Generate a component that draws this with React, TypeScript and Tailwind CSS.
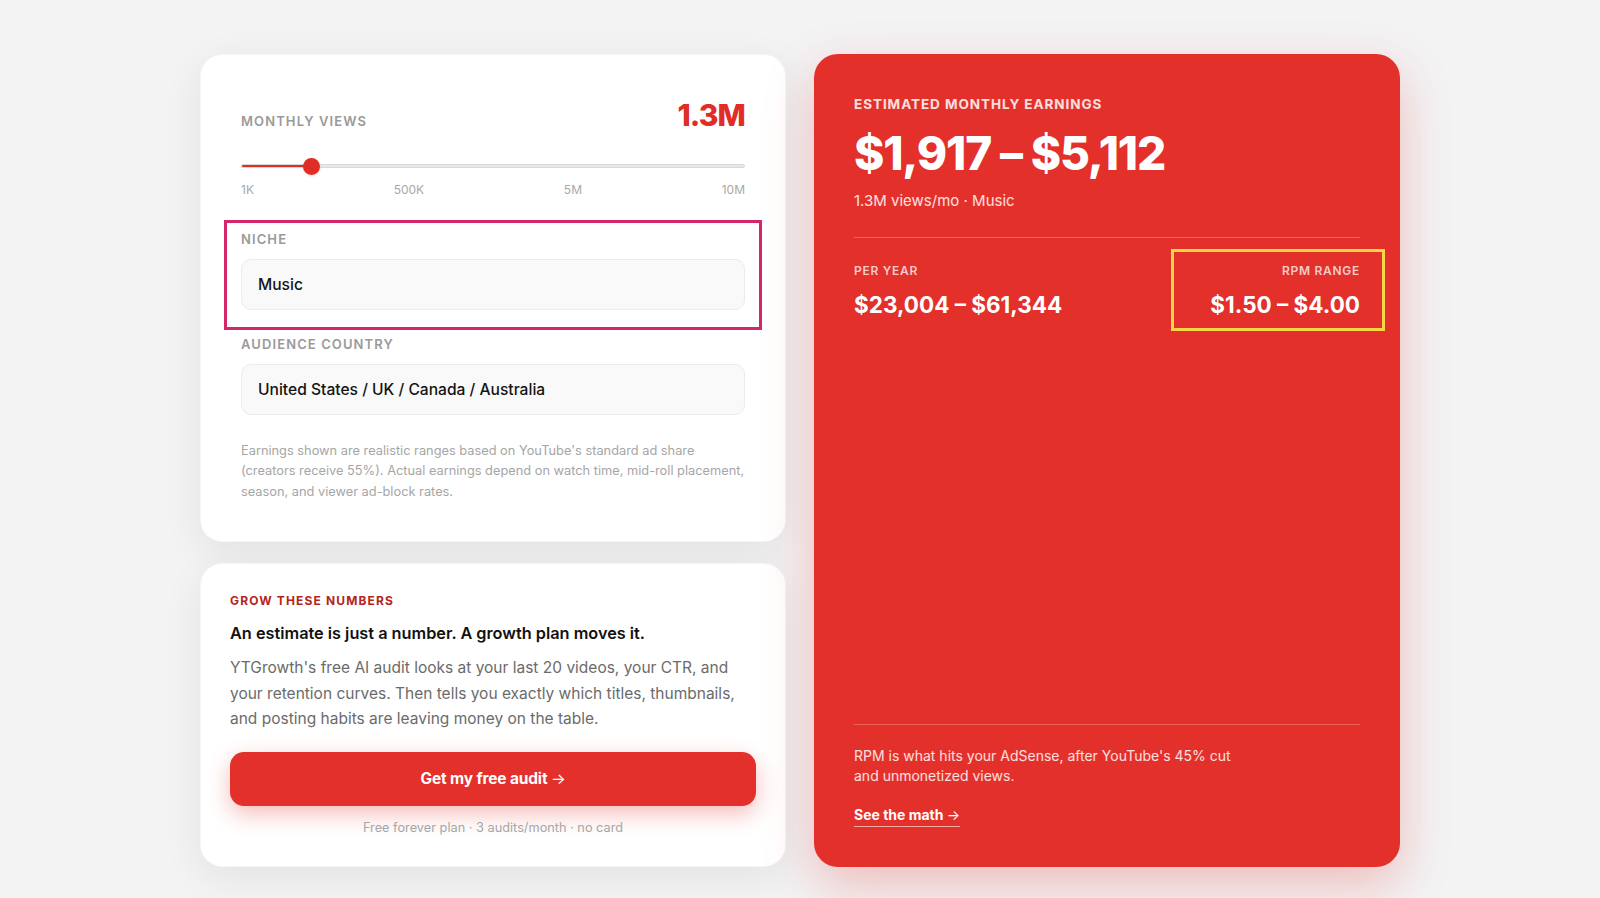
import React from 'react'

const TICKS = ['1K', '500K', '5M', '10M']

const labelCls = 'text-[13px] font-semibold tracking-[0.085em] uppercase text-[#9a9a9a] leading-4'
const fieldCls =
  'h-[51px] flex items-center px-4 rounded-[10px] bg-[#f9f9f9] border border-[#ebebeb] text-[15.6px] font-medium text-[#141414]'

function Arrow() {
  return <span className="font-normal">→</span>
}

export default function App() {
  const views = 1_300_000
  const pct = 13.9

  return (
    <div className="min-h-screen bg-[#f3f3f4] font-[Inter,'Noto_Sans',sans-serif] antialiased">
      <div className="mx-auto w-[1200px] pt-[54px] pb-8 grid grid-cols-2 gap-7">
        {/* Left column */}
        <div className="flex flex-col gap-[21px]">
          {/* Calculator inputs */}
          <div className="bg-white rounded-[22px] border border-black/[0.04] shadow-[0_10px_40px_rgba(0,0,0,0.07)] px-10 pt-[45px] pb-[39px]">
            <div className="flex items-baseline justify-between">
              <span className={labelCls}>Monthly views</span>
              <span className="text-[30px] leading-none font-extrabold tracking-[-0.03em] text-[#e02d26]">
                {(views / 1_000_000).toFixed(1)}M
              </span>
            </div>

            <div className="relative mt-[28px] h-4 flex items-center">
              <div className="w-full h-[4px] rounded-full bg-[#e8e8e8] border border-[#d9d9d9]">
                <div className="h-full rounded-full bg-[#e02d26]" style={{ width: `${pct}%` }} />
              </div>
              <div
                className="absolute top-0 w-[17px] h-[17px] -ml-[8px] -mt-[0.5px] rounded-full bg-[#e02d26] shadow-sm"
                style={{ left: `${pct}%` }}
              />
            </div>
            <div className="mt-2 flex justify-between text-[12px] leading-4 text-[#a8a8a8]">
              {TICKS.map((t) => (
                <span key={t}>{t}</span>
              ))}
            </div>

            {/* Niche */}
            <div className="relative mt-[33px]">
              <span className="absolute -left-[17px] -right-[17px] -top-[11px] -bottom-[20px] border-[3px] border-[#d5266c] pointer-events-none" />
              <div className={labelCls}>Niche</div>
              <div className={`mt-3 ${fieldCls}`}>Music</div>
            </div>

            {/* Country */}
            <div className="mt-[26px]">
              <div className={labelCls}>Audience country</div>
              <div className={`mt-3 ${fieldCls}`}>United States / UK / Canada / Australia</div>
            </div>

            <p className="mt-[26px] text-[12.8px] leading-[20.4px] text-[#a6a6a6]">
              Earnings shown are realistic ranges based on YouTube's standard ad share (creators receive 55%).
              Actual earnings depend on watch time, mid-roll placement, season, and viewer ad-block rates.
            </p>
          </div>

          {/* Growth upsell */}
          <div className="bg-white rounded-[22px] border border-black/[0.04] shadow-[0_10px_40px_rgba(0,0,0,0.07)] px-[29px] pt-[29px] pb-[30px]">
            <div className="text-[12px] leading-4 font-bold tracking-[0.095em] uppercase text-[#b3261e]">
              Grow these numbers
            </div>
            <h3 className="mt-[12px] text-[16.3px] leading-6 font-semibold text-[#111]">
              An estimate is just a number. A growth plan moves it.
            </h3>
            <p className="mt-[10px] text-[15.5px] leading-[25.5px] text-[#6b6b6b]">
              YTGrowth's free AI audit looks at your last 20 videos, your CTR, and your retention curves. Then tells
              you exactly which titles, thumbnails, and posting habits are leaving money on the table.
            </p>
            <button className="mt-[20px] w-full h-[54px] rounded-[14px] bg-[#e3302a] text-white text-[15.5px] font-bold tracking-[-0.01em] shadow-[0_8px_22px_rgba(227,48,42,0.32)]">
              Get my free audit <Arrow />
            </button>
            <p className="mt-[14px] text-center text-[12.75px] leading-4 text-[#a6a6a6]">
              Free forever plan · 3 audits/month · no card
            </p>
          </div>
        </div>

        {/* Result card */}
        <div className="flex flex-col rounded-[24px] bg-[#e3302a] text-white px-10 pt-[42px] pb-10 shadow-[0_18px_50px_rgba(227,48,42,0.28)]">
          <div className="text-[13.5px] leading-4 font-bold tracking-[0.07em] uppercase text-white/85">
            Estimated monthly earnings
          </div>
          <div className="mt-4 text-[46px] leading-[1.1] font-extrabold tracking-[-0.025em]">
            $1,917 – $5,112
          </div>
          <div className="mt-[11px] text-[15px] leading-[22px] text-white/85">1.3M views/mo · Music</div>

          <div className="mt-[25px] border-t border-white/25 pt-[25px] flex justify-between">
            <div>
              <div className="text-[12px] leading-4 font-semibold tracking-[0.06em] uppercase text-white/75">
                Per year
              </div>
              <div className="mt-3 text-[22.5px] leading-7 font-bold">$23,004 – $61,344</div>
            </div>
            <div className="relative text-right">
              <span className="absolute -left-[39px] -right-[25px] -top-[14px] -bottom-[12px] border-[3px] border-[#f7d646] pointer-events-none" />
              <div className="text-[12px] leading-4 font-semibold tracking-[0.06em] uppercase text-white/75">
                RPM range
              </div>
              <div className="mt-3 text-[22.5px] leading-7 font-bold">$1.50 – $4.00</div>
            </div>
          </div>

          <div className="mt-auto border-t border-white/25 pt-[21px]">
            <p className="max-w-[380px] text-[14px] leading-[20.5px] text-white/85">
              RPM is what hits your AdSense, after YouTube's 45% cut and unmonetized views.
            </p>
            <a className="mt-[18px] inline-block text-[14px] leading-5 font-bold border-b border-white/60 pb-[1px]">
              See the math <Arrow />
            </a>
          </div>
        </div>
      </div>
    </div>
  )
}
